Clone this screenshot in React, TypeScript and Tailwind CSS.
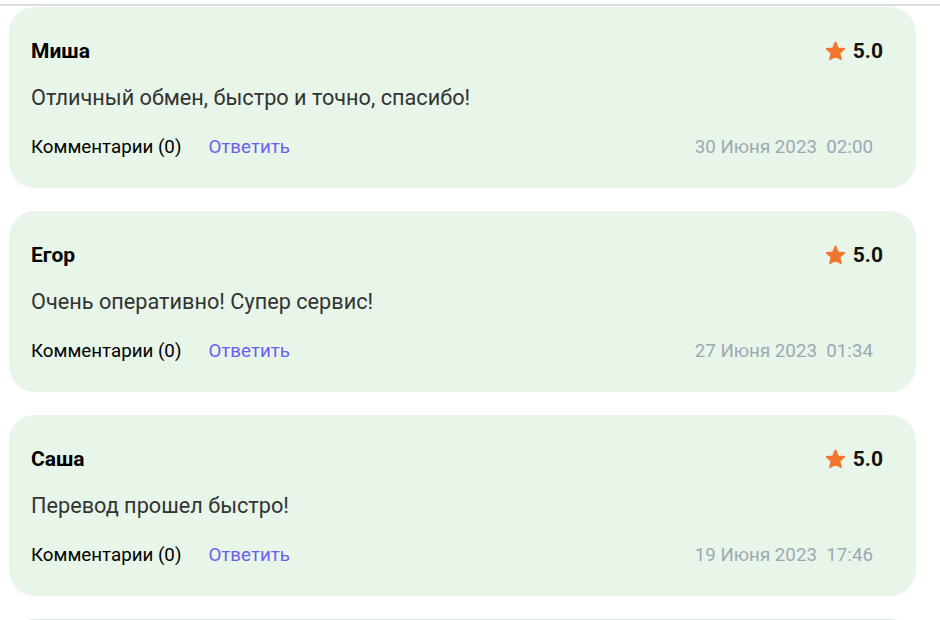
const reviews = [
  { name: "Миша", text: "Отличный обмен, быстро и точно, спасибо!", date: "30 Июня 2023", time: "02:00" },
  { name: "Егор", text: "Очень оперативно! Супер сервис!", date: "27 Июня 2023", time: "01:34" },
  { name: "Саша", text: "Перевод прошел быстро!", date: "19 Июня 2023", time: "17:46" },
];

function Star() {
  return (
    <svg width="23" height="23" viewBox="0 0 24 24" aria-hidden>
      <path
        d="M12 2.5l2.6 6.1 6.6.6-5 4.4 1.5 6.5L12 16.7l-5.7 3.4 1.5-6.5-5-4.4 6.6-.6z"
        fill="#f07630"
        stroke="#f07630"
        strokeWidth="1.8"
        strokeLinejoin="round"
      />
    </svg>
  );
}

function ReviewCard({ name, text, date, time }: (typeof reviews)[number]) {
  return (
    <div className="flex h-[181px] flex-col rounded-[26px] bg-[#e7f6e9] pl-[22px] pr-[33px] pt-[31px]">
      <div className="flex items-center justify-between">
        <span className="text-[21px] font-bold leading-[26px] text-black">{name}</span>
        <span className="flex items-center gap-[6px] text-[21px] font-bold leading-[26px] text-[#111]">
          <Star />
          5.0
        </span>
      </div>
      <p className="mt-[21px] text-[21.7px] leading-[26px] text-[#333]">{text}</p>
      <div className="mt-[25px] flex items-center pr-[10px] text-[18.75px] leading-[22px]">
        <span className="text-black">Комментарии (0)</span>
        <span className="ml-[27px] text-[#6b5ef0]">Ответить</span>
        <span className="ml-auto text-[#9ea8b3]">
          {date}&nbsp;&nbsp;{time}
        </span>
      </div>
    </div>
  );
}

export default function App() {
  return (
    <div className="h-[620px] w-[940px] overflow-hidden bg-white font-['Roboto',sans-serif]">
      <div className="mt-[4px] h-[2px] bg-[#dcdcdc]" />
      <div className="ml-[9px] mr-[24px] mt-[1px] flex flex-col gap-[23px]">
        {reviews.map((r) => (
          <ReviewCard key={r.name} {...r} />
        ))}
        <div className="h-[60px] rounded-t-[26px] border-t border-[#dfe6df] bg-white" />
      </div>
    </div>
  );
}
